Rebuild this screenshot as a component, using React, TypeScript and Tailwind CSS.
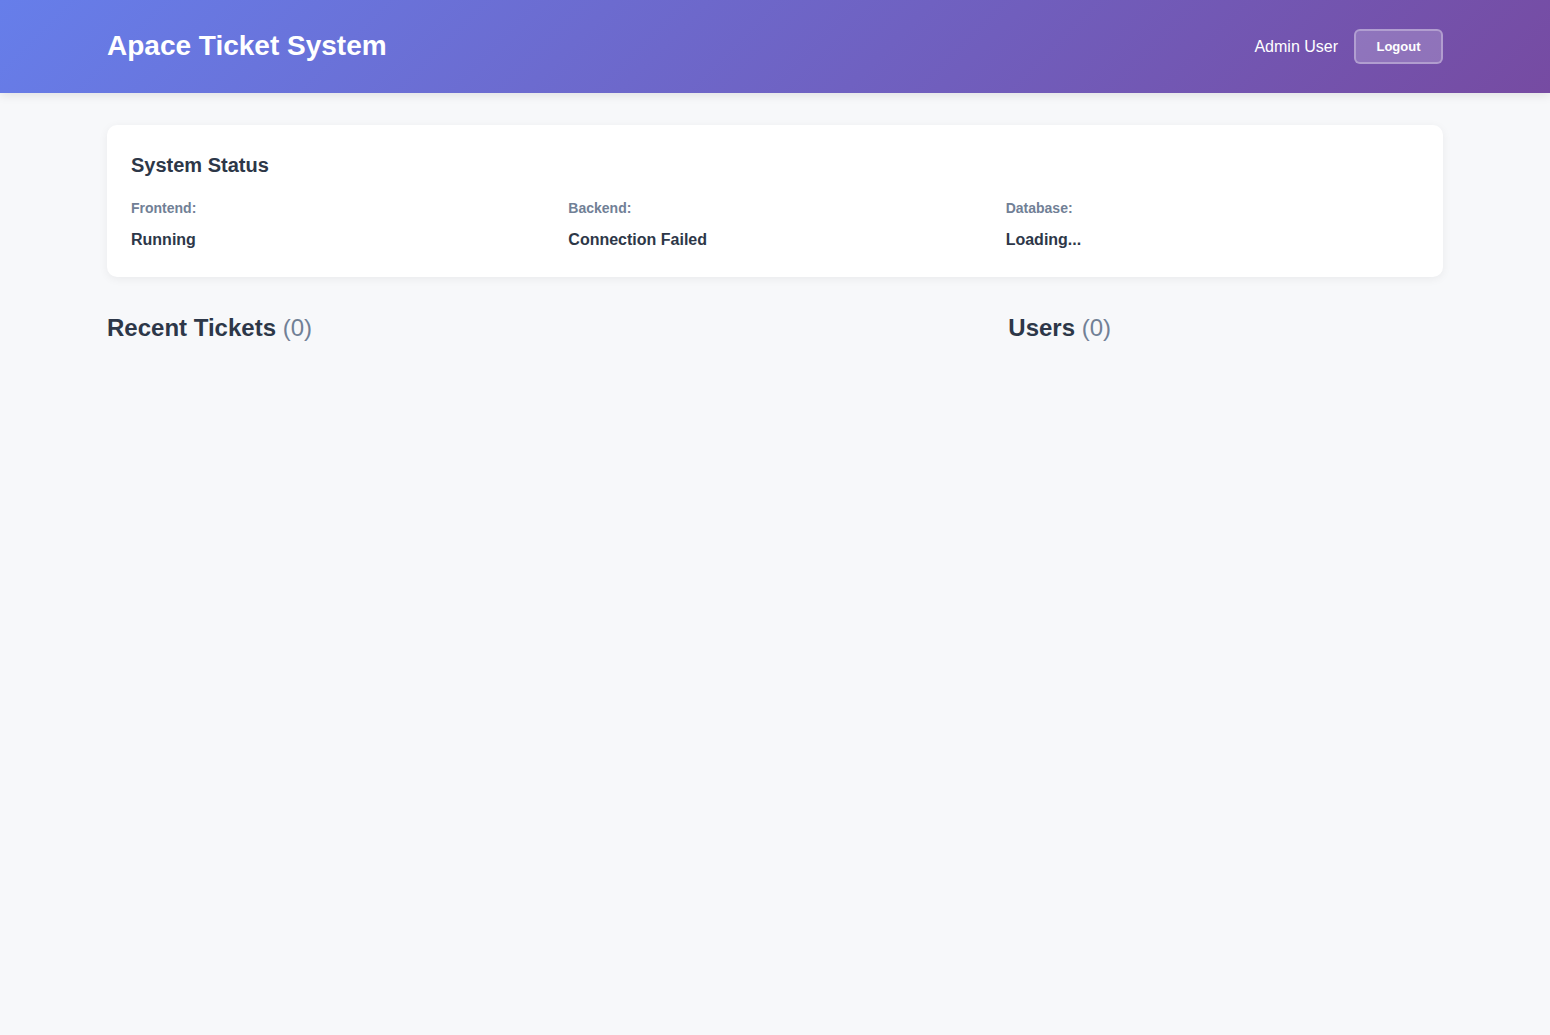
export default function App() {
  return (
    <div className="min-h-screen bg-[#f7f8fa] font-['Liberation_Sans',Arial,sans-serif]">
      <header className="h-[93px] bg-[linear-gradient(135deg,#667eea_0%,#764ba2_100%)] shadow-[0_2px_10px_rgba(0,0,0,0.1)]">
        <div className="mx-auto flex h-full max-w-[1400px] items-center justify-between px-8">
          <h1 className="mb-[2px] text-[28px] font-bold text-white">Apace Ticket System</h1>
          <div className="flex items-center gap-4">
            <span className="text-base text-white">Admin User</span>
            <button className="h-[35px] w-[89px] rounded-md border-2 border-white/30 bg-white/20 text-[13px] font-bold text-white">
              Logout
            </button>
          </div>
        </div>
      </header>
      <main className="mx-auto max-w-[1400px] px-8 pt-8">
        <section className="rounded-[10px] bg-white px-6 pt-[25px] pb-[25px] shadow-[0_2px_10px_rgba(0,0,0,0.06)]">
          <h3 className="mb-[18px] text-xl leading-[30px] font-bold text-[#2d3748]">System Status</h3>
          <div className="grid grid-cols-3 gap-6">
            {[
              ["Frontend:", "Running"],
              ["Backend:", "Connection Failed"],
              ["Database:", "Loading..."],
            ].map(([l, v]) => (
              <div key={l}>
                <div className="mb-[9px] text-sm leading-[21px] font-bold text-[#718096]">{l}</div>
                <div className="text-base leading-6 font-bold text-[#2d3748]">{v}</div>
              </div>
            ))}
          </div>
        </section>
        <div className="mt-8 grid grid-cols-[2fr_1fr] gap-8">
          <h2 className="text-2xl leading-[38px] font-bold text-[#2d3748]">
            Recent Tickets <span className="font-normal text-[#718096]">(0)</span>
          </h2>
          <h2 className="text-2xl leading-[38px] font-bold text-[#2d3748]">
            Users <span className="font-normal text-[#718096]">(0)</span>
          </h2>
        </div>
      </main>
    </div>
  );
}
